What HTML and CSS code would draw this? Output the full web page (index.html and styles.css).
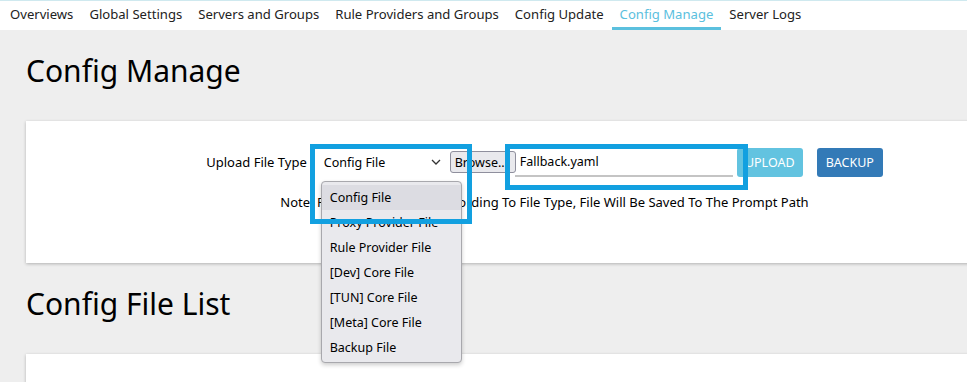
FILE: index.html
```html
<!DOCTYPE html>
<html>
    <head>
        <title>Config Manage</title>
        <meta charset="utf-8">
        <link rel="stylesheet" href="styles.css">
    </head>
    <body>
        <ul class="tabs">
            <li>Overviews</li>
            <li>Global Settings</li>
            <li>Servers and Groups</li>
            <li>Rule Providers and Groups</li>
            <li>Config Update</li>
            <li class="active">Config Manage</li>
            <li>Server Logs</li>
        </ul>

        <div class="main">
            <h2>Config Manage</h2>
            <div class="card card-upload">
                <div class="upload-row">
                    <span class="label">Upload File Type</span>
                    <div class="select-wrap">
                        <div class="select">
                            <span>Config File</span>
                            <svg class="chevron" width="10" height="6" viewBox="0 0 10 6"><path d="M1 1l4 4 4-4" fill="none" stroke="#333" stroke-width="1.3"/></svg>
                        </div>
                        <ul class="dropdown">
                            <li class="hover">Config File</li>
                            <li>Proxy Provider File</li>
                            <li>Rule Provider File</li>
                            <li>[Dev] Core File</li>
                            <li>[TUN] Core File</li>
                            <li>[Meta] Core File</li>
                            <li>Backup File</li>
                        </ul>
                        <div class="mark mark-1"></div>
                    </div>
                    <div class="file-wrap">
                        <button class="browse">Browse...</button>
                        <div class="file-name">Fallback.yaml</div>
                        <div class="mark mark-2"></div>
                    </div>
                    <button class="btn btn-upload">UPLOAD</button>
                    <button class="btn btn-backup">BACKUP</button>
                </div>
                <p class="note">Note: Please Upload Files According To File Type, File Will Be Saved To The Prompt Path</p>
            </div>

            <h2>Config File List</h2>
            <div class="card card-list"></div>
        </div>
    </body>
</html>
```

FILE: styles.css
```css
html, body{overflow: hidden;}
body{
      margin: 0;
      background: #eeeeee;
      font-family: "Noto Sans", "Open Sans", sans-serif;
      color: #000;
}

.tabs{
      display: flex;
      margin: 0;
      padding: 0 0 0 2px;
      list-style: none;
      background: #fff;
      border-top: 1px solid #cfe9ef;
      height: 29px;
}
.tabs li{
      padding: 0 8px;
      font-size: 13.1px;
      line-height: 26px;
      color: #222;
      border-bottom: 3px solid transparent;
}
.tabs li.active{
      color: #5bc0de;
      border-bottom-color: #5bc0de;
}

.main{
      width: 1037px;
      padding: 0 26px;
}
h2{
      font-size: 30px;
      font-weight: normal;
      line-height: 40px;
      margin: 21px 0 30px;
}

.card{
      background: #fff;
      box-shadow: 0 1px 3px rgba(0, 0, 0, 0.25);
}
.card-upload{
      height: 142px;
      padding-top: 26px;
      box-sizing: border-box;
}
.card-list{height: 60px;}

.upload-row{
      display: flex;
      align-items: center;
      justify-content: center;
      height: 30px;
      font-size: 13px;
}
.label{margin-right: 9px;}

.select-wrap{position: relative;}
.select{
      display: flex;
      align-items: center;
      justify-content: space-between;
      width: 132px;
      height: 29px;
      padding: 0 7px 0 8px;
      box-sizing: border-box;
      background: #fff;
      font-size: 12.5px;
}
.dropdown{
      position: absolute;
      left: 5px;
      top: 33px;
      width: 139px;
      margin: 0;
      padding: 3px 0 2px;
      list-style: none;
      background: #e9e9ed;
      border: 1px solid #a8a8ad;
      border-radius: 4px;
      box-shadow: 0 2px 4px rgba(0, 0, 0, 0.2);
      font-size: 12.5px;
      z-index: 2;
}
.dropdown li{
      height: 25px;
      line-height: 25px;
      padding-left: 8px;
}
.dropdown li.hover{background: #dcdce2;}

.mark{
      position: absolute;
      border: 5px solid #12a0e0;
      z-index: 3;
}
.mark-1{left: -6px; top: -4px; width: 152px; height: 70px;}
.mark-2{left: 55px; top: -4px; width: 233px; height: 36px;}

.file-wrap{
      position: relative;
      display: flex;
      align-items: center;
      margin-left: 2px;
}
.browse{
      width: 66px;
      height: 22px;
      padding: 0 0 0 4px;
      text-align: left;
      overflow: hidden;
      white-space: nowrap;
      background: #e9e9ed;
      border: 1px solid #8f8f9d;
      border-radius: 3px;
      font-family: inherit;
      font-size: 12.5px;
      color: #000;
}
.file-name{
      width: 213px;
      height: 27px;
      line-height: 27px;
      padding-left: 5px;
      margin-left: -1px;
      border-bottom: 2px solid #c4c4c4;
      font-size: 12.5px;
}

.btn{
      height: 29px;
      width: 66px;
      border: none;
      border-radius: 3px;
      color: #fff;
      font-family: inherit;
      font-size: 12.5px;
}
.btn-upload{background: #62c3e0; margin-left: 4px;}
.btn-backup{background: #337ab7; margin-left: 14px;}

.note{
      margin: 16px 0 0;
      text-align: center;
      font-size: 13px;
}
```
